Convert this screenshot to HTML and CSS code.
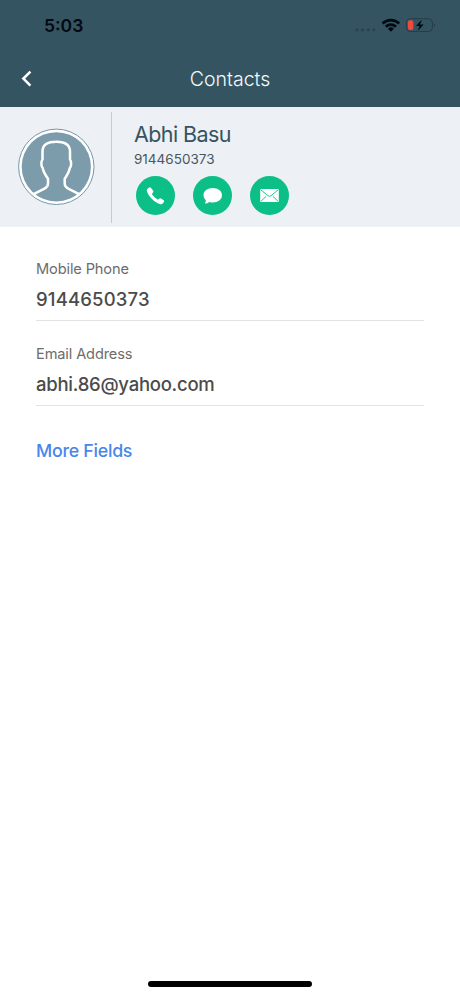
FILE: index.html
```html
<!DOCTYPE html>
<html lang="en">
<head>
<meta charset="utf-8">
<title>Contacts</title>
<link rel="stylesheet" href="styles.css">
</head>
<body>
<div class="screen">
  <header class="top">
    <div class="status">
      <span class="time">5:03</span>
      <svg class="indicators" width="84" height="19" viewBox="-.4 -.6 84 19">
        <g fill="#29434f"><circle cx="2.5" cy="13.2" r="1.6"/><circle cx="8.2" cy="13.2" r="1.6"/><circle cx="13.9" cy="13.2" r="1.6"/><circle cx="19.5" cy="13.2" r="1.6"/></g>
        <g fill="none" stroke="#020912" stroke-width="2.7"><path d="M28.2 6.9a11.8 11.8 0 0 1 16.6 0"/><path d="M31.4 10.1a7.3 7.3 0 0 1 10.2 0"/></g>
        <path d="M33.5 12.2a4.3 4.3 0 0 1 6 0l-3 3z" fill="#020912"/>
        <rect x="52" y="2.1" width="26" height="12.8" rx="4" fill="none" stroke="#243c47"/>
        <rect x="53.5" y="3.6" width="5.4" height="9.8" rx="2" fill="#f04a3e"/>
        <path d="M79.5 6.5q2.4 2 0 4z" fill="#243c47"/>
        <path d="M67.5 2.8l-6 6.7h3.6l-1.8 5 6-6.7h-3.6z" fill="#020912" stroke="#355461" stroke-width="2.4" paint-order="stroke"/>
      </svg>
    </div>
    <nav class="nav">
      <svg class="back" width="14" height="20" viewBox="0 0 14 20"><path d="M10.4 2.6L3.4 9.6l7 7" fill="none" stroke="#fff" stroke-width="2.6"/></svg>
      <h1 class="title">Contacts</h1>
    </nav>
  </header>

  <section class="profile">
    <div class="portrait">
      <svg width="79" height="78" viewBox="0 0 79 78">
        <circle cx="39.3" cy="38.8" r="37.7" fill="#fff" stroke="#7896a8"/>
        <circle cx="39.3" cy="38.8" r="34.6" fill="#7d9cab"/>
        <path d="M16.6 66.2L26.5 61.2Q31 59 31 55.5V50.7C28.5 47 26.5 44.5 25.8 40.2C24.2 39 23.7 33.5 25.5 31.5V23.5C25.5 16.5 30.5 13.7 39.3 13.7S53 16.5 53 23.5V31.5C54.8 33.5 54.3 39 52.7 40.2C52 44.5 50.2 47 47.7 50.7V55.5Q47.7 59 52.2 61.2L62 66.2" fill="none" stroke="#fff" stroke-width="2.5" stroke-linejoin="round"/>
      </svg>
    </div>
    <div class="summary">
      <h2 class="name">Abhi Basu</h2>
      <p class="number">9144650373</p>
      <div class="actions">
        <span class="action"><svg width="39" height="39" viewBox="0 0 39 39"><path d="M11.2 13.1L13.2 11.4Q14.1 10.8 14.9 11.7L17.2 14.7Q17.8 15.7 17 16.5L16.1 17.5Q15.9 18.1 16.5 18.9Q18.5 21.6 21.2 23.3Q21.9 23.7 22.5 23.2L23.5 22.4Q24.2 21.9 25.1 22.5L27.7 24.3Q28.6 25.1 27.9 26L26.4 27.7Q25.4 28.6 23.7 28.1C18.4 26.2 12.8 20.9 11 15.5Q10.5 14 11.2 13.1z" fill="#fff"/></svg></span>
        <span class="action"><svg width="39" height="39" viewBox="0 0 39 39"><path d="M19.8 12C25 12 29 15 29 19.2S25 26.4 19.8 26.4Q18 26.4 16.4 25.9Q14.6 27.4 11.8 27.5Q12.9 26 12.8 24.3Q10.5 22.2 10.5 19.2C10.5 15 14.6 12 19.8 12z" fill="#fff"/></svg></span>
        <span class="action"><svg width="39" height="39" viewBox="0 0 39 39"><path d="M10.2 13h18.6v13H10.2z" fill="#fff"/><path d="M10.4 13.5L18 19.7q1.5 1.2 3 0l7.6-6.2M10.7 25.5l5.4-5.2M28.3 25.5l-5.4-5.2" fill="none" stroke="#0bbf87" stroke-width=".9"/></svg></span>
      </div>
    </div>
  </section>

  <main class="fields">
    <div class="field">
      <div class="label phone-label">Mobile Phone</div>
      <div class="value phone-value">9144650373</div>
    </div>
    <div class="field">
      <div class="label email-label">Email Address</div>
      <div class="value email-value">abhi.86@yahoo.com</div>
    </div>
    <a class="more">More Fields</a>
  </main>
  <div class="home"></div>
</div>
</body>
</html>
```
FILE: styles.css
```css
* { box-sizing: border-box; margin: 0; padding: 0; }
body { background: #fff; font-family: Inter, "Liberation Sans", sans-serif; }
svg { display: block; }
.screen { width: 460px; height: 996px; display: flex; flex-direction: column; overflow: hidden; }
.top { height: 107px; background: #355461; }
.status { height: 50px; padding: 16px 22px 0 44px; display: flex; justify-content: space-between; }
.time { font-size: 17.5px; line-height: 20px; font-weight: 600; color: #020912; }
.nav { height: 57px; padding: 0 20px; display: grid; grid-template-columns: 14px 1fr 14px; align-items: center; }
.title { font-size: 19.5px; line-height: 24px; font-weight: 300; color: #f2fafc; text-align: center; }
.profile { height: 120px; background: #edf0f4; display: flex; padding-top: 5px; }
.portrait { width: 112px; height: 111px; padding: 16px 0 0 17px; border-right: 1px solid #c8cbce; }
.summary { padding: 8px 0 0 22px; }
.name { font-size: 21.5px; line-height: 28px; font-weight: 400; letter-spacing: -.6px; color: #355461; }
.number { font-size: 13.5px; line-height: 18px; margin-top: 2px; color: #48575f; }
.actions { display: flex; gap: 18px; margin: 8px 0 0 2px; }
.action { width: 39px; height: 39px; border-radius: 50%; background: #0bbf87; }
.fields { flex: 1; padding: 30px 36px 0; }
.field { height: 64px; margin-bottom: 21px; border-bottom: 1px solid #e3e3e3; }
.label { font-size: 14.6px; line-height: 24px; letter-spacing: -.13px; color: #6c6c6c; }
.value { font-size: 18.5px; line-height: 24px; margin-top: 6px; font-weight: 500; color: #4b4b4b; }
.phone-value { letter-spacing: .17px; }
.email-value { letter-spacing: -.25px; }
.more { display: inline-block; margin-top: 12px; font-size: 17.8px; line-height: 24px; font-weight: 500; letter-spacing: -.27px; color: #4a86ea; }
.home { width: 164px; height: 6px; margin: 0 auto 9px; border-radius: 3px; background: #000; }
```
